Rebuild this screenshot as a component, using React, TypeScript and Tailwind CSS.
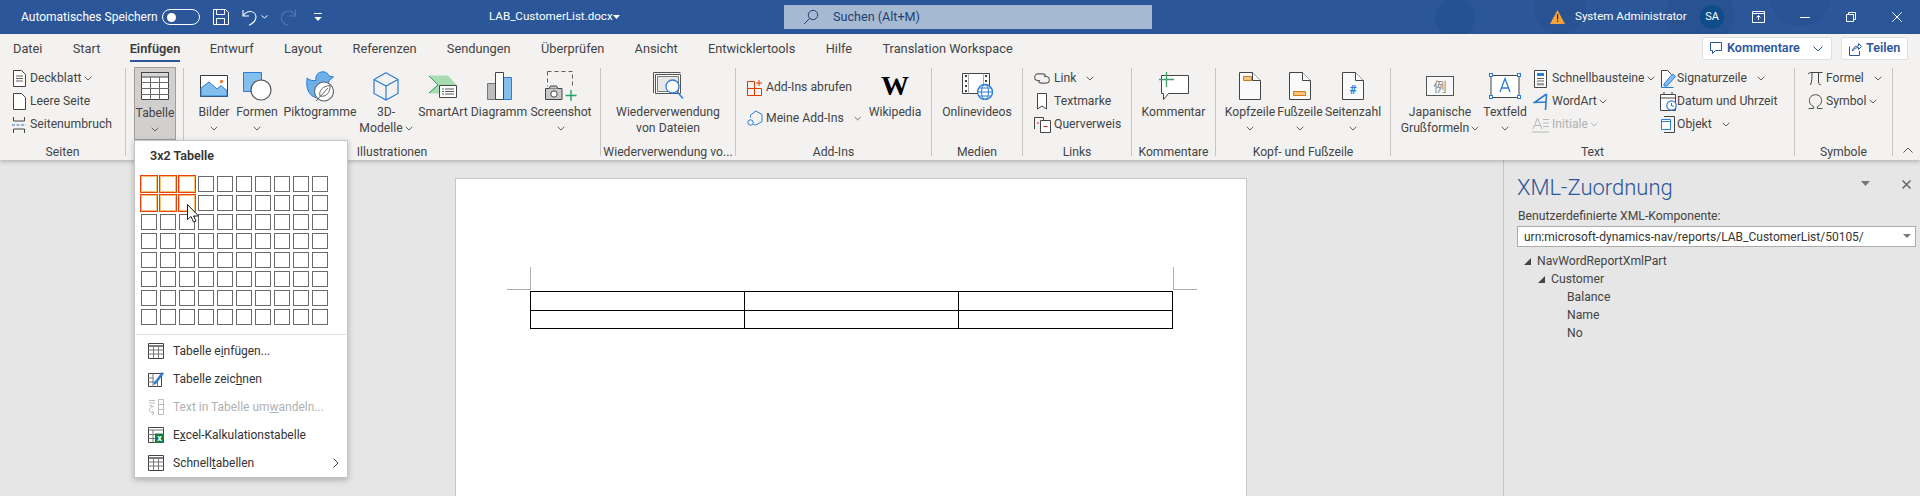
import type { ReactNode } from "react";

const INK = "#444444";
const BLUE = "#2b7cd3";
const LIGHT = "#83beec";
const GREY = "#605e5c";

function Chev({ className = "" }: { className?: string }) {
  return (
    <svg width="8" height="5" viewBox="0 0 8 5" className={className}>
      <path d="M.7.8 4 4l3.300-3.200" fill="none" stroke={GREY} />
    </svg>
  );
}

function Sep() {
  return <div className="w-px h-[88px] mt-px bg-[#c8c6c4] shrink-0" />;
}

function Group({ w, label, children, className = "" }: { w: string; label: string; children: ReactNode; className?: string }) {
  return (
    <div className={`${w} shrink-0 flex flex-col`}>
      <div className={`h-[76px] flex ${className}`}>{children}</div>
      <div className="h-[17px] pt-px leading-[17px] text-center whitespace-nowrap">{label}</div>
    </div>
  );
}

function Large({ w, icon, line1, line2, chev, inline }: { w: string; icon: ReactNode; line1: string; line2?: string; chev?: boolean; inline?: boolean }) {
  return (
    <div className={`${w} shrink-0 flex flex-col items-center`}>
      <div className="h-[38px] flex items-center justify-center">{icon}</div>
      <div className="leading-[15.5px] whitespace-nowrap">{line1}</div>
      {line2 && (
        <div className="leading-[15.5px] whitespace-nowrap flex items-center gap-[2px]">
          {line2}
          {inline && <Chev />}
        </div>
      )}
      {chev && !line2 && (
        <div className="h-[15.5px] flex items-center">
          <Chev />
        </div>
      )}
    </div>
  );
}

function Small({ icon, label, chev, gap = "ml-[3px]", dim, h = "h-[23px]" }: { icon: ReactNode; label: string; chev?: string; gap?: string; dim?: boolean; h?: string }) {
  return (
    <div className={`${h} flex items-center whitespace-nowrap ${dim ? "text-[#b1b1b1]" : ""}`}>
      <div className="w-[18px] flex justify-center shrink-0">{icon}</div>
      <span className={gap}>{label}</span>
      {chev && <Chev className={chev} />}
    </div>
  );
}

function Doc({ children }: { children?: ReactNode }) {
  return (
    <svg width="22" height="28" viewBox="0 0 22 28">
      <path d="M.5.5h13l8 8v19H.5z" fill="#fafafa" stroke={INK} />
      <path d="M13.500.5v8h8" fill="#fff" stroke={INK} />
      {children}
    </svg>
  );
}

function TableGlyph({ size = 16 }: { size?: number }) {
  return (
    <svg width={size} height={size} viewBox="0 0 16 16">
      <path d="M.5.5h15v15H.5z" fill="#fff" stroke={INK} />
      <path d="M.5 3h15" stroke={INK} strokeWidth="1.400" />
      <path d="M.5 7h15M.5 11h15M5.500 3v12M10.500 3v12" stroke="#777" />
    </svg>
  );
}

function Tabs() {
  const names = ["Datei", "Start", "Einfügen", "Entwurf", "Layout", "Referenzen", "Sendungen", "Überprüfen", "Ansicht", "Entwicklertools", "Hilfe", "Translation Workspace"];
  return (
    <div className="h-[33px] flex items-start pl-[13px] gap-[30.3px] text-[12.8px]">
      {names.map((n) =>
        n === "Einfügen" ? (
          <div key={n} className="h-[28px] pt-[5px] leading-[20px] font-semibold border-b-[2.5px] border-[#2b579a] text-[#3b3b3b] -mx-px">
            {n}
          </div>
        ) : (
          <div key={n} className="h-[28px] pt-[5px] leading-[20px]">
            {n}
          </div>
        )
      )}
    </div>
  );
}

function TitleBar() {
  return (
    <div className="relative h-[34px] bg-[#2b579a] text-white flex items-center text-[12px] overflow-hidden shrink-0">
      <svg className="absolute right-0 top-0" width="640" height="34" viewBox="0 0 640 34">
        <circle cx="175" cy="18" r="20" fill="#24508f" opacity=".7" />
        <circle cx="280" cy="8" r="26" fill="#264f8c" opacity=".6" />
        <circle cx="420" cy="14" r="34" fill="#264f8c" opacity=".6" />
        <circle cx="520" cy="-4" r="30" fill="#24508f" opacity=".5" />
      </svg>
      <div className="relative w-[784px] shrink-0 flex items-center pl-[21px]">
        <span className="w-[141px] whitespace-nowrap">Automatisches Speichern</span>
        <div className="w-[38px] h-[16px] rounded-full border border-white flex items-center pl-[4px]">
          <div className="w-[9px] h-[9px] rounded-full bg-white" />
        </div>
        <svg className="ml-[13px]" width="16" height="16" viewBox="0 0 16 16" fill="none" stroke="#fff">
          <path d="M.5.5h12l3 3v12H.5z" />
          <path d="M3.500.5v5h8v-5M3.500 15.500v-6h8v6" />
        </svg>
        <svg className="ml-[13px]" width="16" height="17" viewBox="0 0 16 17" fill="none" stroke="#fff" strokeWidth="1.100">
          <path d="M1 1v6h6" />
          <path d="M1.200 6.800C3 4 5 2.500 8 2.500c3.500 0 6 2.400 6 5.600 0 3.600-3 6.200-7 8.200" />
        </svg>
        <Chev8 className="ml-[3px]" />
        <svg className="ml-[12px]" width="17" height="17" viewBox="0 0 17 17" fill="none" stroke="#4f76b0" strokeWidth="1.100">
          <path d="M15.500 1v6h-6" />
          <path d="M15.300 6.800C13.500 3.500 11.500 2 8.500 2 4.500 2 1.500 5 1.500 9s3 7 7 7" />
        </svg>
        <svg className="ml-[17px]" width="8" height="9" viewBox="0 0 8 9" fill="#fff">
          <path d="M0 0h8v1H0zM.3 4h7.400L4 8z" />
        </svg>
        <span className="ml-[167px] w-[124px] whitespace-nowrap text-[11.6px]">LAB_CustomerList.docx</span>
        <svg width="7" height="4" viewBox="0 0 7 4" fill="#fff">
          <path d="M0 0h7L3.500 4z" />
        </svg>
      </div>
      <div className="relative w-[368px] h-[24px] shrink-0 bg-[#a6b9d3] flex items-center pl-[19px] text-[#1f3f72] text-[12.6px]">
        <svg width="16" height="16" viewBox="0 0 16 16" fill="none" stroke="#1f3f72">
          <circle cx="10" cy="6" r="4.700" />
          <path d="M6.600 9.400 1.200 15" />
        </svg>
        <span className="ml-[14px]">Suchen (Alt+M)</span>
      </div>
      <div className="relative flex-1 flex items-center">
        <svg className="ml-[398px]" width="15" height="14" viewBox="0 0 15 14">
          <path d="M7.500 0 15 14H0z" fill="#f2a33a" />
          <path d="M7 4h1.200v5.500H7zM7 10.500h1.200V12H7z" fill="#3a2a10" />
        </svg>
        <span className="ml-[10px] w-[114px] whitespace-nowrap text-[11.6px]">System Administrator</span>
        <div className="ml-[11px] w-[24px] h-[24px] rounded-full bg-[#0f4c8a] text-[11px] flex items-center justify-center">SA</div>
        <svg className="ml-[28px]" width="13" height="12" viewBox="0 0 13 12" fill="none" stroke="#fff">
          <path d="M.5.5h12v11H.5zM.5 2.500h12" />
          <path d="M6.500 9V4.500M4.500 6.500l2-2 2 2" />
        </svg>
        <svg className="ml-[35px]" width="10" height="1" viewBox="0 0 10 1">
          <path d="M0 .5h10" stroke="#fff" />
        </svg>
        <svg className="ml-[36px]" width="10" height="10" viewBox="0 0 10 10" fill="none" stroke="#fff">
          <path d="M.5 2.500h7v7h-7zM2.500 2.500v-2h7v7h-2" />
        </svg>
        <svg className="ml-[36px]" width="10" height="10" viewBox="0 0 10 10" fill="none" stroke="#fff">
          <path d="M.3.3l9.400 9.400M9.700.3.3 9.700" />
        </svg>
      </div>
    </div>
  );
}

function Chev8({ className = "" }: { className?: string }) {
  return (
    <svg width="7" height="4" viewBox="0 0 7 4" className={className}>
      <path d="M.5.5 3.500 3l3-2.500" fill="none" stroke="#fff" />
    </svg>
  );
}

function IconTable() {
  return (
    <svg width="28" height="28" viewBox="0 0 28 28">
      <path d="M.5.5h27v27H.5z" fill="#fff" stroke={INK} />
      <path d="M.5.5h27V5H.5z" fill="#d8d8d8" stroke={INK} />
      <path d="M9.500 5v23M18.500 5v23M0 10.500h28M0 16.500h28M0 22.500h28" stroke="#6a6a6a" />
    </svg>
  );
}

function IconBilder() {
  return (
    <svg width="28" height="22" viewBox="0 0 28 22">
      <path d="M.5.5h27v21H.5z" fill="#fff" stroke="#3a3a3a" />
      <path d="M1 21v-8l8-6 8 7 4-3.500 6 5.500v5z" fill={LIGHT} stroke={BLUE} />
      <circle cx="21.500" cy="6.500" r="1.700" fill="#ed7d31" />
    </svg>
  );
}

function IconFormen() {
  return (
    <svg width="29" height="29" viewBox="0 0 29 29">
      <path d="M.5.5h18v19H.5z" fill={LIGHT} stroke={BLUE} />
      <circle cx="18" cy="18" r="10" fill="#fff" stroke="#555" strokeWidth="1.200" />
    </svg>
  );
}

function IconPikto() {
  return (
    <svg width="28" height="31" viewBox="0 0 28 31">
      <path d="M1 7c2 2 5 3 9 2.500C9 4.500 12 .8 17 .8c3 0 5 1.700 6 4.200l4.500 1-4.500 3.500c0 3-1 5-3 7L11 27C4.500 25.500.8 20 .8 13z" fill="#6cb0ea" stroke={BLUE} />
      <circle cx="18" cy="20.500" r="9.500" fill="#fff" stroke="#666" strokeWidth="1.100" />
      <path d="M10 30 22 17M14 25c-1.500-5 2.500-10 10-10.500 .5 7-4 12-10 10.500z" fill="#fff" stroke="#666" />
    </svg>
  );
}

function Icon3D() {
  return (
    <svg width="26" height="29" viewBox="0 0 26 29" fill="none" stroke={BLUE} strokeWidth="1.200">
      <path d="M13 .8 25 7.500v14L13 28 1 21.500v-14z" />
      <path d="M1 7.500 13 14l12-6.500M13 14v14" />
    </svg>
  );
}

function IconSmartArt() {
  return (
    <svg width="30" height="23" viewBox="0 0 30 23">
      <path d="M1 1h19l8 9-7 8H1l9-8z" fill="#a8dcb0" stroke="#a8dcb0" />
      <path d="M1 18l9-8" stroke="#21a366" fill="none" />
      <path d="M1 1l9 9" stroke="#21a366" fill="none" />
      <path d="M11.500 10.500h17v12h-17z" fill="#fff" stroke={INK} />
      <path d="M14 14h2M17 14h9M14 16.500h2M17 16.500h9M14 19h2M17 19h9" stroke="#555" />
    </svg>
  );
}

function IconDiagramm() {
  return (
    <svg width="25" height="28" viewBox="0 0 25 28">
      <path d="M.5 11.500h8v16h-8z" fill="#bdbdbd" stroke="#777" />
      <path d="M16.500 5.500h8v22h-8z" fill={LIGHT} stroke={BLUE} />
      <path d="M8.500.5h8v27h-8z" fill="#fff" stroke={INK} />
    </svg>
  );
}

function IconScreenshot() {
  return (
    <svg width="32" height="30" viewBox="0 0 32 30">
      <path d="M2.500 .5h25v17M2.500 .5v15" fill="none" stroke={GREY} strokeDasharray="4 3" />
      <path d="M.5 17.500h16.500v11H.5z" fill="#c8c8c8" stroke="#444" />
      <path d="M4 17.500l1.500-2.500h6l1.500 2.500" fill="#c8c8c8" stroke="#444" />
      <circle cx="9" cy="23" r="3.200" fill="#fff" stroke="#444" />
      <path d="M26 19v11M20.500 24.500h11" stroke="#21a366" strokeWidth="1.400" />
    </svg>
  );
}

function IconWieder() {
  return (
    <svg width="31" height="28" viewBox="0 0 31 28" fill="none">
      <path d="M.5 21V.5h27" stroke="#555" />
      <path d="M2.500 2.500h25v19h-25z" fill="#fff" stroke="#555" />
      <path d="M4.500 4.500h21v15h-21z" fill="#e8e8e8" stroke="#777" />
      <circle cx="19.500" cy="14.500" r="6.500" fill="#fff" stroke={BLUE} strokeWidth="1.300" />
      <path d="m24 19.500 6 7" stroke={BLUE} strokeWidth="1.500" />
    </svg>
  );
}

function IconAddIn() {
  return (
    <svg width="16" height="16" viewBox="0 0 16 16" fill="none" stroke="#d83b01">
      <path d="M.5 1.500h7v14h-7zM.5 8.500h14v7h-7" />
      <path d="M12 0v6M9 3h6" />
    </svg>
  );
}

function IconMeine() {
  return (
    <svg width="17" height="17" viewBox="0 0 17 17" fill="none" stroke={BLUE}>
      <path d="M3.500 7.500V5L9 1l6 3.500v7l-6 3.500-2.500-.5" />
      <circle cx="3.500" cy="12.500" r="2.700" />
    </svg>
  );
}

function IconVideo() {
  return (
    <svg width="31" height="27" viewBox="0 0 31 27">
      <path d="M.5.5h27v20H.5z" fill="#fff" stroke={INK} />
      <path d="M4 2v2M4 7v2M4 12v2M4 17v2M24 2v2M24 7v2" stroke={INK} strokeWidth="2" />
      <path d="M6.500.5v20M21.500.5v20" stroke="#aaa" />
      <circle cx="23" cy="19" r="7.500" fill="#fff" stroke={BLUE} strokeWidth="1.300" />
      <ellipse cx="23" cy="19" rx="3.500" ry="7.500" fill="none" stroke={BLUE} />
      <path d="M15.500 19h15M17 15h12M17 23h12" stroke={BLUE} />
    </svg>
  );
}

function IconLink() {
  return (
    <svg width="16" height="11" viewBox="0 0 16 11" fill="none" stroke={GREY} strokeWidth="1.100">
      <path d="M6 7.500H4a3.300 3.300 0 0 1 0-6.600h4.500c2 0 3 1.300 3 2.600" />
      <path d="M10 3.500h2a3.300 3.300 0 0 1 0 6.600H7.500c-2 0-3-1.300-3-2.600" />
    </svg>
  );
}

function IconMark() {
  return (
    <svg width="10" height="17" viewBox="0 0 10 17" fill="#fff" stroke={INK}>
      <path d="M.5.500h9v15.500l-4.500-3-4.500 3z" />
    </svg>
  );
}

function IconQuer() {
  return (
    <svg width="17" height="16" viewBox="0 0 17 16" fill="none" stroke={INK}>
      <path d="M.5 12V.5h9V3" />
      <path d="M6.500 3.500h10v12h-10z" fill="#fff" />
      <path d="M3 6h2M9.500 9.500h4" stroke="#e81123" />
    </svg>
  );
}

function IconKommentar() {
  return (
    <svg width="30" height="28" viewBox="0 0 30 28">
      <path d="M2.500 3.500h27v18h-20l-5 6v-6h-2z" fill="#fff" stroke={INK} />
      <path d="M7.500 0v15M0 7.500h15" stroke="#3f9f6b" strokeWidth="1.300" />
    </svg>
  );
}

function IconJapan() {
  return (
    <div className="w-[28px] h-[20px] border border-[#555] bg-[#f8f8f8] text-[13px] leading-[18px] text-center text-[#8a8a8a] font-['Noto_Sans_CJK_JP',sans-serif]">
      例
    </div>
  );
}

function IconTextfeld() {
  return (
    <svg width="32" height="26" viewBox="0 0 32 26">
      <path d="M2 2.500h28v22H2z" fill="#fff" stroke={INK} />
      <path d="M11 19 16 5.500 21 19M12.800 15h6.400" fill="none" stroke={BLUE} strokeWidth="1.300" />
      {[
        [0, 0.5],
        [28, 0.5],
        [0, 22.5],
        [28, 22.5],
      ].map(([x, y]) => (
        <rect key={`${x}${y}`} x={x + 0.5} y={y} width="3" height="3" fill="#fff" stroke={BLUE} />
      ))}
    </svg>
  );
}

function IconSchnell() {
  return (
    <svg width="13" height="18" viewBox="0 0 13 18">
      <path d="M.5.500h12v17H.5z" fill="#fff" stroke={INK} />
      <path d="M3 3h7v3H3z" fill={BLUE} />
      <path d="M3 8.500h7M3 11h7" stroke={GREY} />
      <path d="M3 13h7v2.500H3z" fill="#9a9a9a" />
    </svg>
  );
}

function IconWordArt() {
  return (
    <svg width="15" height="18" viewBox="0 0 15 18" fill="none" stroke={BLUE} strokeWidth="1.600">
      <path d="M13.500 1 1.500 9.500l11-.5M13.500 1l-1 16" />
    </svg>
  );
}

function IconInitiale() {
  return (
    <svg width="17" height="16" viewBox="0 0 17 16" fill="none" stroke="#b8b8b8">
      <path d="M1 12 5.500 1 10 12M2.500 8.500h6M11 2.500h6M11 6h6M11 9.500h6M0 15h17" />
    </svg>
  );
}

function IconSign() {
  return (
    <svg width="15" height="18" viewBox="0 0 15 18">
      <path d="M.5 17.500V.5h6l4 4" fill="#fff" stroke={INK} />
      <path d="M3 14 11.500 4l3 2.500-8.500 9.500H3z" fill={LIGHT} stroke={BLUE} />
      <path d="M.5 17.500h12" stroke={BLUE} />
    </svg>
  );
}

function IconDatum() {
  return (
    <svg width="17" height="19" viewBox="0 0 17 19">
      <path d="M.5 2.500h15v16H.5z" fill="#fff" stroke={INK} />
      <path d="M0 6h16M4 0v3M12 0v3" stroke={INK} />
      <circle cx="11.500" cy="13.500" r="4.700" fill="#fff" stroke={BLUE} strokeWidth="1.200" />
      <path d="M11.500 11v3h2.500" fill="none" stroke={BLUE} />
    </svg>
  );
}

function IconObjekt() {
  return (
    <svg width="14" height="17" viewBox="0 0 14 17" fill="none">
      <path d="M3 .5h10.500v16H3" stroke={INK} />
      <path d="M.5 3.500h9v10h-9z" fill="#fff" stroke={BLUE} />
      <path d="M.5 5.500h9" stroke={BLUE} />
    </svg>
  );
}

function IconPi() {
  return (
    <svg width="15" height="13" viewBox="0 0 15 13" fill="none" stroke={INK}>
      <path d="M0 1.500c1.500 0 1.500-1 3-1h11.500M4 1c0 5 0 8-1.500 12M10.500 1v9c0 2 1 3 3 3" />
    </svg>
  );
}

function IconOmega() {
  return (
    <svg width="15" height="15" viewBox="0 0 16 16" fill="none" stroke={INK}>
      <path d="M.5 15.500H6v-2C3 12 1.500 10 1.500 7 1.500 3.300 4 .8 8 .8s6.500 2.500 6.500 6.200c0 3-1.500 5-4.500 6.500v2h5.500" />
    </svg>
  );
}

function Ribbon() {
  return (
    <div className="relative z-10 h-[126px] bg-[#f3f2f1] shadow-[0_2px_4px_rgba(0,0,0,0.2)] text-[#444] text-[12.2px] shrink-0">
      <Tabs />
      <div className="absolute right-[12px] top-[3px] h-[23px] flex gap-[9px] text-[#2b579a] text-[12.6px] font-semibold">
        <div className="w-[130px] bg-white border border-[#e1dfdd] rounded-[2px] flex items-center pl-[7px]">
          <svg width="13" height="13" viewBox="0 0 13 13" fill="none" stroke="#2b579a">
            <path d="M.5.5h11v8h-6l-3 3v-3h-2z" />
          </svg>
          <span className="ml-[4px] w-[86px]">Kommentare</span>
          <svg width="10" height="6" viewBox="0 0 10 6">
            <path d="M.5.500 5 5 9.500.5" fill="none" stroke="#2b579a" />
          </svg>
        </div>
        <div className="w-[67px] bg-white border border-[#e1dfdd] rounded-[2px] flex items-center pl-[7px]">
          <svg width="13" height="14" viewBox="0 0 13 14" fill="none" stroke="#2b579a">
            <path d="M.5 4.500v9h10V9" />
            <path d="M3.500 9c0-3 2.500-5 6-5V1.500l3 3-3 3V5.500c-2.500 0-4.500 1.500-6 3.500z" />
          </svg>
          <span className="ml-[4px]">Teilen</span>
        </div>
      </div>
      <div className="flex h-[93px] items-start">
        <Group w="w-[125px]" label="Seiten" className="flex-col pl-[10px]">
          <Small
            gap="ml-[2px]"
            icon={
              <svg width="13" height="17" viewBox="0 0 13 17" fill="#fff" stroke={INK}>
                <path d="M.5.500h8l4 4v12H.5z" />
                <path d="M3 6h7M3 8.500h7M3 11h7" stroke={GREY} />
              </svg>
            }
            label="Deckblatt"
            chev="ml-[3px]"
          />
          <Small
            gap="ml-[2px]"
            icon={
              <svg width="13" height="17" viewBox="0 0 13 17" fill="#fff" stroke={INK}>
                <path d="M.5.500h8l4 4v12H.5z" />
              </svg>
            }
            label="Leere Seite"
          />
          <Small
            gap="ml-[2px]"
            icon={
              <svg width="14" height="16" viewBox="0 0 14 16" fill="none" stroke={INK}>
                <path d="M1.500 0v4h11V0M1.500 16v-4h11v4" />
                <path d="M0 8h14" stroke={BLUE} strokeDasharray="3 1.500" />
              </svg>
            }
            label="Seitenumbruch"
          />
        </Group>
        <Sep />
        <Group w="w-[57px]" label="" className="pl-[8px]">
          <div className="w-[42px] h-[73px] bg-[#d2d0ce] border border-[#a19f9d] flex flex-col items-center">
            <div className="h-[38px] pt-[4px]">
              <IconTable />
            </div>
            <div className="leading-[15.5px] whitespace-nowrap">Tabelle</div>
            <div className="h-[15.5px] flex items-center">
              <Chev />
            </div>
          </div>
        </Group>
        <Sep />
        <Group w="w-[416px]" label="Illustrationen" className="pl-[8px]">
          <Large w="w-[44px]" icon={<IconBilder />} line1="Bilder" chev />
          <Large w="w-[42px]" icon={<IconFormen />} line1="Formen" chev />
          <Large w="w-[84px]" icon={<IconPikto />} line1="Piktogramme" />
          <Large w="w-[48px]" icon={<Icon3D />} line1="3D-" line2="Modelle" inline />
          <Large w="w-[66px]" icon={<IconSmartArt />} line1="SmartArt" />
          <Large w="w-[46px]" icon={<IconDiagramm />} line1="Diagramm" />
          <Large w="w-[78px]" icon={<IconScreenshot />} line1="Screenshot" chev />
        </Group>
        <Sep />
        <Group w="w-[134px]" label="Wiederverwendung vo..." className="justify-center">
          <Large w="w-[110px]" icon={<IconWieder />} line1="Wiederverwendung" line2="von Dateien" />
        </Group>
        <Sep />
        <Group w="w-[195px]" label="Add-Ins" className="pl-[10px]">
          <div className="w-[115px] pt-[5px] shrink-0">
            <Small h="h-[31px]" icon={<IconAddIn />} label="Add-Ins abrufen" gap="ml-[2px]" />
            <Small h="h-[31px]" icon={<IconMeine />} label="Meine Add-Ins" gap="ml-[2px]" chev="ml-[10px]" />
          </div>
          <div className="w-[68px] shrink-0 flex flex-col items-center">
            <div className="h-[38px] flex items-center justify-center font-['Liberation_Serif',serif] font-bold text-[28px] leading-none text-black">W</div>
            <div className="leading-[15.5px]">Wikipedia</div>
          </div>
        </Group>
        <Sep />
        <Group w="w-[90px]" label="Medien" className="justify-center">
          <Large w="w-[80px]" icon={<IconVideo />} line1="Onlinevideos" />
        </Group>
        <Sep />
        <Group w="w-[108px]" label="Links" className="flex-col pl-[10px]">
          <Small icon={<IconLink />} label="Link" chev="ml-[10px]" />
          <Small icon={<IconMark />} label="Textmarke" />
          <Small icon={<IconQuer />} label="Querverweis" />
        </Group>
        <Sep />
        <Group w="w-[83px]" label="Kommentare" className="justify-center">
          <Large w="w-[70px]" icon={<IconKommentar />} line1="Kommentar" />
        </Group>
        <Sep />
        <Group w="w-[174px]" label="Kopf- und Fußzeile" className="pl-[9px]">
          <Large
            w="w-[50px]"
            line1="Kopfzeile"
            chev
            icon={
              <Doc>
                <path d="M4.500 4.500h8v4h-8z" fill="#f7c27e" stroke="#d87a14" />
              </Doc>
            }
          />
          <Large
            w="w-[50px]"
            line1="Fußzeile"
            chev
            icon={
              <Doc>
                <path d="M4.500 19.500h12v4h-12z" fill="#f7c27e" stroke="#d87a14" />
              </Doc>
            }
          />
          <Large
            w="w-[56px]"
            line1="Seitenzahl"
            chev
            icon={
              <Doc>
                <text x="11" y="22" textAnchor="middle" fontSize="12" fontWeight="700" fill={BLUE} stroke="none">
                  #
                </text>
              </Doc>
            }
          />
        </Group>
        <Sep />
        <Group w="w-[403px]" label="Text" className="pl-[9px]">
          <Large w="w-[80px]" icon={<IconJapan />} line1="Japanische" line2="Grußformeln" inline />
          <Large w="w-[50px]" icon={<IconTextfeld />} line1="Textfeld" chev />
          <div className="w-[129px] pl-px shrink-0">
            <Small icon={<IconSchnell />} label="Schnellbausteine" chev="ml-[2px]" />
            <Small icon={<IconWordArt />} label="WordArt" chev="ml-[2px]" />
            <Small icon={<IconInitiale />} label="Initiale" chev="ml-[2px] opacity-40" dim />
          </div>
          <div className="flex-1">
            <Small icon={<IconSign />} label="Signaturzeile" chev="ml-[10px]" gap="ml-0" />
            <Small icon={<IconDatum />} label="Datum und Uhrzeit" gap="ml-0" />
            <Small icon={<IconObjekt />} label="Objekt" chev="ml-[10px]" gap="ml-0" />
          </div>
        </Group>
        <Sep />
        <Group w="w-[97px]" label="Symbole" className="flex-col pl-[11px]">
          <Small icon={<IconPi />} label="Formel" chev="ml-[10px]" gap="ml-[2px]" />
          <Small icon={<IconOmega />} label="Symbol" chev="ml-[3px]" gap="ml-[2px]" />
        </Group>
        <Sep />
        <svg className="ml-[10px] mt-[80px]" width="10" height="6" viewBox="0 0 10 6">
          <path d="M.5 5.500 5 1l4.500 4.500" fill="none" stroke={GREY} />
        </svg>
      </div>
    </div>
  );
}

function Page() {
  return (
    <div className="w-[792px] h-[340px] bg-white border border-[#c6c6c6] pt-[88px] pl-[51px]">
      <div className="flex h-[24px]">
        <div className="w-[23px] h-[23px] border-b border-[#b0b0b0]" />
        <div className="w-[644px] h-[23px] border-x border-[#b0b0b0]" />
        <div className="w-[23px] h-[23px] border-b border-[#b0b0b0]" />
      </div>
      <table className="ml-[23px] w-[643px] border-collapse table-fixed">
        <tbody>
          {["h-[19px]", "h-[18px]"].map((h) => (
            <tr key={h} className={h}>
              <td className="border border-black p-0" />
              <td className="border border-black p-0" />
              <td className="border border-black p-0" />
            </tr>
          ))}
        </tbody>
      </table>
    </div>
  );
}

function TaskPane() {
  return (
    <div className="w-[417px] shrink-0 border-l border-[#c6c6c6] pl-[13px] pr-[4px] text-[#444] text-[12.2px]">
      <div className="h-[39px] flex items-center pt-[15px] text-[#2b579a] text-[22px] font-light relative">
        XML-Zuordnung
        <svg className="absolute left-[344px] top-[21px]" width="9" height="5" viewBox="0 0 9 5" fill="#777">
          <path d="M0 0h9L4.500 5z" />
        </svg>
        <svg className="absolute left-[385px] top-[20px]" width="9" height="9" viewBox="0 0 9 9" fill="none" stroke="#666" strokeWidth="1.500">
          <path d="M.5.5l8 8M8.500.5l-8 8" />
        </svg>
      </div>
      <div className="h-[27px] leading-[34px] pl-px">Benutzerdefinierte XML-Komponente:</div>
      <div className="h-[21px] bg-white border border-[#ababab] flex items-center pl-[6px] text-[#333] text-[12px] relative">
        urn:microsoft-dynamics-nav/reports/LAB_CustomerList/50105/
        <svg className="absolute right-[4px] top-[7px]" width="8" height="4" viewBox="0 0 8 4" fill="#777">
          <path d="M0 0h8L4 4z" />
        </svg>
      </div>
      <div className="mt-[5px]">
        <div className="h-[18px] flex items-center pl-[7px]">
          <svg width="7" height="7" viewBox="0 0 7 7" fill="#444">
            <path d="M7 0v7H0z" />
          </svg>
          <span className="ml-[6px]">NavWordReportXmlPart</span>
        </div>
        <div className="h-[18px] flex items-center pl-[21px]">
          <svg width="7" height="7" viewBox="0 0 7 7" fill="#444">
            <path d="M7 0v7H0z" />
          </svg>
          <span className="ml-[6px]">Customer</span>
        </div>
        {["Balance", "Name", "No"].map((n) => (
          <div key={n} className="h-[18px] leading-[18px] pl-[50px]">
            {n}
          </div>
        ))}
      </div>
    </div>
  );
}

function TableMenu() {
  const menu: { icon: ReactNode; text: ReactNode; dim?: boolean; arrow?: boolean }[] = [
    {
      icon: <TableGlyph />,
      text: (
        <>
          Tabelle e<u>i</u>nfügen...
        </>
      ),
    },
    {
      icon: (
        <svg width="16" height="16" viewBox="0 0 16 16">
          <path d="M.5 2.500h13v13H.5z" fill="#fff" stroke={INK} />
          <path d="M5 2.500v13M9.500 10v5.500M.5 7h5M.5 11h8" stroke="#777" />
          <path d="M6 11.500 14 1l2 1.500-8 10.500-2.500 1z" fill={BLUE} />
        </svg>
      ),
      text: (
        <>
          Tabelle zeic<u>h</u>nen
        </>
      ),
    },
    {
      icon: (
        <svg width="16" height="16" viewBox="0 0 16 16" fill="none" stroke="#bcbcbc">
          <path d="M1 1.500h6M1 4h6M1 6.500H4M10.500.5h5v15h-5zM10.500 5.500h5M10.500 10.500h5" />
          <path d="M6 7.500C3 7.500 1.500 9 1.500 11S3 14 6 14M4 12l2 2-2 2" />
        </svg>
      ),
      text: (
        <>
          Text in Tabelle um<u>w</u>andeln...
        </>
      ),
      dim: true,
    },
    {
      icon: (
        <svg width="16" height="16" viewBox="0 0 16 16">
          <path d="M.5.500h15v15H.5z" fill="#fff" stroke={INK} />
          <path d="M.5 3h15M.5 7.500h7M.5 11.500h7M5 3v12.500" stroke="#777" />
          <path d="M7 6.500h9V16H7z" fill="#107c41" />
          <text x="11.500" y="14" textAnchor="middle" fontSize="9" fontWeight="700" fill="#fff">
            x
          </text>
        </svg>
      ),
      text: (
        <>
          E<u>x</u>cel-Kalkulationstabelle
        </>
      ),
    },
    {
      icon: <TableGlyph />,
      text: (
        <>
          Schnell<u>t</u>abellen
        </>
      ),
      arrow: true,
    },
  ];
  return (
    <div className="absolute z-20 left-[134px] top-[140px] w-[214px] h-[338px] bg-white border border-[#c8c6c4] shadow-[0_2px_6px_rgba(0,0,0,0.25)] text-[#333] text-[12px]">
      <div className="h-[35px] pl-[15px] pt-[5px] leading-[20px] font-semibold text-[12.5px]">3x2 Tabelle</div>
      <div className="ml-[6px] grid grid-cols-[repeat(10,16px)] gap-[3px]">
        {Array.from({ length: 80 }, (_, i) =>
          i < 3 || (i >= 10 && i < 13) ? (
            <div key={i} className="w-[16px] h-[16px] border border-[#f8c070] outline-1 outline-[#e8430a]" />
          ) : (
            <div key={i} className="w-[16px] h-[16px] border border-[#6a6a6a]" />
          )
        )}
      </div>
      <svg className="absolute left-[52px] top-[63px]" width="12" height="19" viewBox="0 0 12 19">
        <path d="M.5.500v15l3.500-3 2.500 5.500 2.500-1-2.500-5h5z" fill="#fff" stroke="#222" />
      </svg>
      <div className="mt-[9px] mx-px border-t border-[#e1dfdd]" />
      <div className="mt-[2px]">
        {menu.map((m, i) => (
          <div key={i} className={`h-[28px] flex items-center pl-[13px] ${m.dim ? "text-[#b1b1b1]" : ""}`}>
            {m.icon}
            <span className="ml-[9px] whitespace-nowrap">{m.text}</span>
            {m.arrow && (
              <svg className="ml-auto mr-[8px]" width="6" height="10" viewBox="0 0 6 10">
                <path d="M.5.500 5 5 .5 9.500" fill="none" stroke="#444" />
              </svg>
            )}
          </div>
        ))}
      </div>
    </div>
  );
}

export default function App() {
  return (
    <div className="relative h-[496px] w-[1920px] overflow-hidden flex flex-col bg-[#e6e6e6] font-['Roboto',sans-serif]">
      <TitleBar />
      <Ribbon />
      <div className="flex-1 flex min-h-0">
        <div className="flex-1 pl-[455px] pt-[18px] overflow-hidden">
          <Page />
        </div>
        <TaskPane />
      </div>
      <TableMenu />
    </div>
  );
}
